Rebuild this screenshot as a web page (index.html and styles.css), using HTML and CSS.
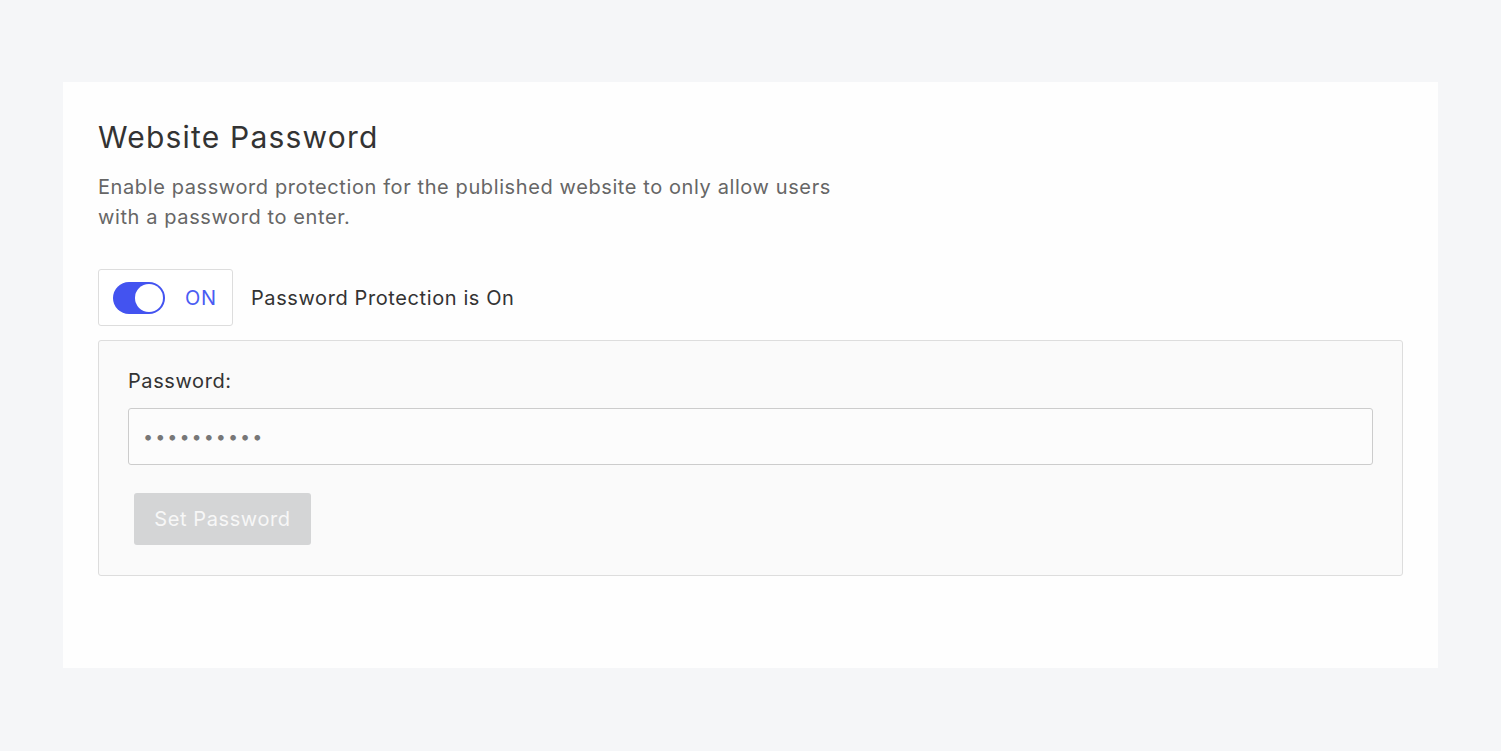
FILE: index.html
```html
<!DOCTYPE html>
<html lang="en">
<head>
    <meta charset="UTF-8">
    <meta name="viewport" content="width=device-width, initial-scale=1.0">
    <title>Website Password</title>
    <link rel="stylesheet" href="styles.css">
</head>
<body>
    <div class="card">
        <h1 class="title">Website Password</h1>
        <p class="description">Enable password protection for the published website to only allow users<br>with a password to enter.</p>

        <div class="toggle-row">
            <label class="toggle">
                <span class="switch"><span class="knob"></span></span>
                <span class="toggle-text">ON</span>
            </label>
            <span class="toggle-label">Password Protection is On</span>
        </div>

        <div class="panel">
            <label class="field-label" for="password">Password:</label>
            <input class="field-input" id="password" type="password" value="secretpass">
            <button class="set-button" disabled>Set Password</button>
        </div>
    </div>
</body>
</html>
```

FILE: styles.css
```css
* {
    margin: 0;
    padding: 0;
    box-sizing: border-box;
    font-family: Inter, "Noto Sans", sans-serif;
    letter-spacing: 0.03em;
}

body {
    background: #f5f6f8;
    padding: 82px 63px;
}

.card {
    background: #fefefe;
    padding: 35px 35px 92px;
    min-height: 585px;
}

.title {
    font-size: 30px;
    font-weight: 400;
    color: #333;
    line-height: 40px;
    letter-spacing: 0.04em;
}

.description {
    margin-top: 15px;
    font-size: 20px;
    line-height: 30px;
    color: #666;
}

.toggle-row {
    display: flex;
    align-items: center;
    gap: 18px;
    margin-top: 37px;
}

.toggle {
    display: flex;
    align-items: center;
    gap: 20px;
    width: 135px;
    height: 57px;
    padding: 0 14px;
    border: 1px solid #ddd;
    border-radius: 3px;
    background: #fff;
}

.switch {
    display: flex;
    align-items: center;
    justify-content: flex-end;
    width: 52px;
    height: 32px;
    padding: 2px;
    border-radius: 16px;
    background: #4353f0;
}

.knob {
    width: 28px;
    height: 28px;
    border-radius: 50%;
    background: #fff;
}

.toggle-text {
    font-size: 20px;
    color: #4a5cf3;
}

.toggle-label {
    font-size: 20px;
    color: #333;
}

.panel {
    display: flex;
    flex-direction: column;
    align-items: flex-start;
    margin-top: 14px;
    padding: 25px 29px 30px;
    background: #fafafa;
    border: 1px solid #ddd;
    border-radius: 3px;
}

.field-label {
    font-size: 20px;
    line-height: 30px;
    color: #333;
}

.field-input {
    width: 100%;
    height: 57px;
    margin-top: 12px;
    padding: 0 14px;
    border: 1px solid #ccc;
    border-radius: 3px;
    background: #fcfcfc;
    color: #777;
    font-size: 18px;
    letter-spacing: 2px;
}

.set-button {
    margin: 28px 0 0 6px;
    width: 177px;
    height: 52px;
    border: none;
    border-radius: 3px;
    background: #d4d5d6;
    color: #f7f7f7;
    font-size: 20px;
}
```
